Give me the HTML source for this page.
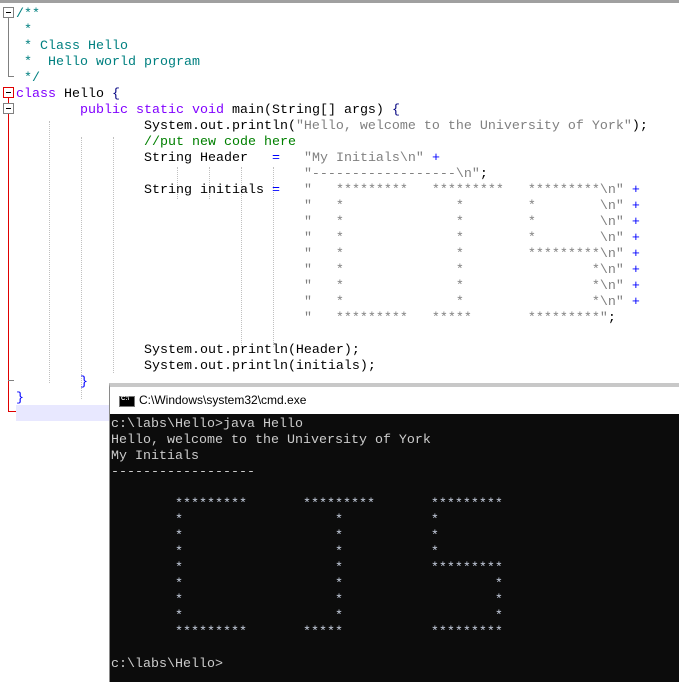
<!DOCTYPE html>
<html><head><style>
*{margin:0;padding:0}
body{width:679px;height:678px;background:#fff;position:relative;overflow:hidden;font-family:"Liberation Mono",monospace}
.top{position:absolute;left:0;top:0;width:679px;height:3px;background:#a0a0a0}
pre{position:absolute;left:16px;top:7px;font:13.33px/16px "Liberation Mono",monospace;color:#000;white-space:pre}
.c{color:#008080}.k{color:#8000ff}.s{color:#808080}.g{color:#008000}.o{color:#000080}.b{color:#0000ff}
.hl{position:absolute;left:16px;top:405px;width:663px;height:16px;background:#e8e8ff}
.guide{position:absolute;width:0;border-left:1px dotted #c0c0c0}
.fold{position:absolute;width:9px;height:9px;border:1px solid #808080;background:#fff}
.fold:after{content:"";position:absolute;left:2px;top:4px;width:5px;height:1px;background:#000}
.red{border-color:#e00000}
.cmd{position:absolute;left:109px;top:383px;width:570px;height:295px;border-top:4px solid #c8c8c8;border-left:1px solid #8a8a8a;background:#fff}
.tb{height:27px;position:relative}
.tb span{position:absolute;left:29px;top:6px;font:12px "Liberation Sans",sans-serif;color:#000}
.ico{position:absolute;left:9px;top:9px;width:14px;height:9px;background:#000;border:1px solid #777}
.ico:after{content:"C:\\";position:absolute;left:1px;top:-1px;font:bold 6px "Liberation Sans";color:#fff}
.con{position:absolute;left:0;top:27px;width:570px;height:268px;background:#0c0c0c}
.con pre{left:1px;top:3px;color:#cccccc}
.st{color:#c8d0e0}
</style></head><body>
<div class="top"></div>
<div class="hl"></div>
<div class="guide" style="left:49px;top:121px;height:262px"></div>
<div class="guide" style="left:81px;top:137px;height:262px"></div>
<div class="guide" style="left:113px;top:137px;height:236px"></div>
<div class="guide" style="left:177px;top:167px;height:32px"></div>
<div class="guide" style="left:209px;top:167px;height:32px"></div>
<div class="guide" style="left:241px;top:167px;height:180px"></div>
<div class="guide" style="left:273px;top:167px;height:180px"></div>
<div style="position:absolute;left:8px;top:17px;width:1px;height:60px;background:#808080"></div>
<div style="position:absolute;left:8px;top:76px;width:6px;height:1px;background:#808080"></div>
<div style="position:absolute;left:8px;top:96px;width:1px;height:316px;background:#e00000"></div>
<div style="position:absolute;left:8px;top:411px;width:8px;height:1px;background:#e00000"></div>
<div style="position:absolute;left:8px;top:380px;width:6px;height:1px;background:#808080"></div>
<div class="fold" style="left:3px;top:7px"></div>
<div class="fold red" style="left:3px;top:87px"></div>
<div class="fold" style="left:3px;top:103px"></div>
<pre><span class="c">/**
 *
 * Class Hello
 *  Hello world program
 */</span>
<span class="k">class</span> Hello <span class="o">{</span>
        <span class="k">public static void</span> main(String[] args) <span class="o">{</span>
                System.out.println(<span class="s">"Hello, welcome to the University of York"</span>);
                <span class="g">//put new code here</span>
                String Header   <span class="b">=</span>   <span class="s">"My Initials\n"</span> <span class="b">+</span>
                                    <span class="s">"------------------\n"</span>;
                String initials <span class="b">=</span>   <span class="s">"   *********   *********   *********\n"</span> <span class="b">+</span>
                                    <span class="s">"   *              *        *        \n"</span> <span class="b">+</span>
                                    <span class="s">"   *              *        *        \n"</span> <span class="b">+</span>
                                    <span class="s">"   *              *        *        \n"</span> <span class="b">+</span>
                                    <span class="s">"   *              *        *********\n"</span> <span class="b">+</span>
                                    <span class="s">"   *              *                *\n"</span> <span class="b">+</span>
                                    <span class="s">"   *              *                *\n"</span> <span class="b">+</span>
                                    <span class="s">"   *              *                *\n"</span> <span class="b">+</span>
                                    <span class="s">"   *********   *****       *********"</span>;

                System.out.println(Header);
                System.out.println(initials);
        <span class="b">}</span>
<span class="b">}</span></pre>
<div class="cmd">
<div class="tb"><div class="ico"></div><span>C:\Windows\system32\cmd.exe</span></div>
<div class="con"><pre>c:\labs\Hello&gt;java Hello
Hello, welcome to the University of York
My Initials
------------------

<span class="st">        *********       *********       *********
        *                   *           *
        *                   *           *
        *                   *           *
        *                   *           *********
        *                   *                   *
        *                   *                   *
        *                   *                   *
        *********       *****           *********</span>

c:\labs\Hello&gt;</pre></div>
</div>
</body></html>
